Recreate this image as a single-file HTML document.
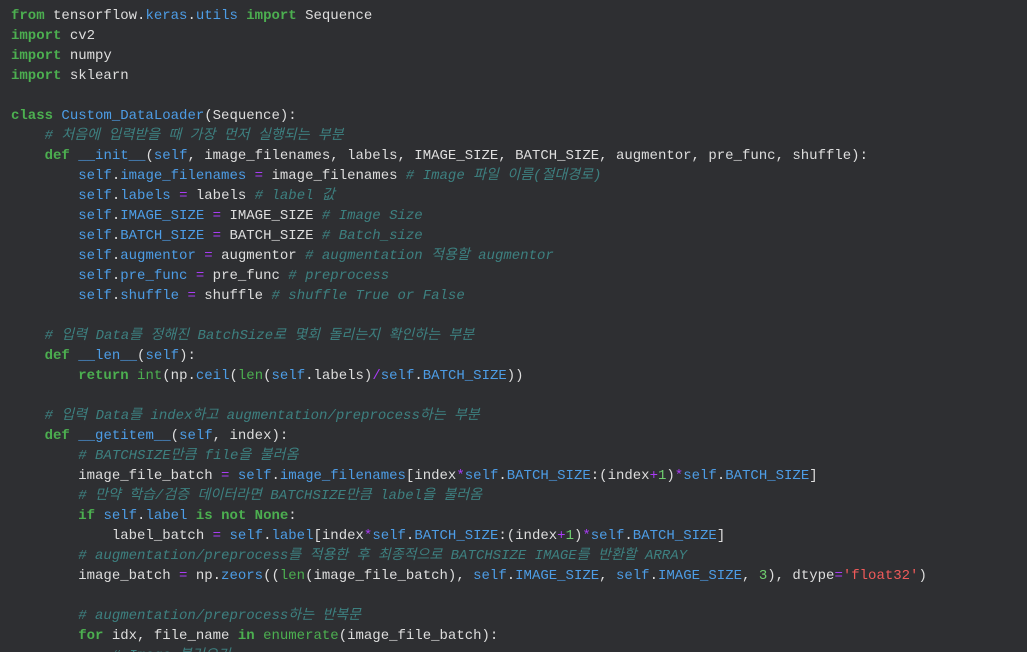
<!DOCTYPE html>
<html><head><meta charset="utf-8"><style>
html,body{margin:0;padding:0;background:#2e2f32;width:1027px;height:652px;overflow:hidden}
pre{margin:0;padding:6px 0 0 11px;font-family:"Liberation Mono","Noto Sans CJK KR",monospace;font-size:14px;line-height:20px;color:#dedede;white-space:pre}
.k{color:#4caf50;font-weight:bold}
.f{color:#4caf50}
.b{color:#4d9de6}
.o{color:#a93cf5}
.c{color:#3d8080;font-style:italic}
.s{color:#f05a5a}
.n{color:#6fcf6f}
</style></head><body><pre><span class="k">from</span> tensorflow.<span class="b">keras</span>.<span class="b">utils</span> <span class="k">import</span> Sequence
<span class="k">import</span> cv2
<span class="k">import</span> numpy
<span class="k">import</span> sklearn

<span class="k">class</span> <span class="b">Custom_DataLoader</span>(Sequence):
    <span class="c"># 처음에 입력받을 때 가장 먼저 실행되는 부분</span>
    <span class="k">def</span> <span class="b">__init__</span>(<span class="b">self</span>, image_filenames, labels, IMAGE_SIZE, BATCH_SIZE, augmentor, pre_func, shuffle):
        <span class="b">self</span>.<span class="b">image_filenames</span> <span class="o">=</span> image_filenames <span class="c"># Image 파일 이름(절대경로)</span>
        <span class="b">self</span>.<span class="b">labels</span> <span class="o">=</span> labels <span class="c"># label 값</span>
        <span class="b">self</span>.<span class="b">IMAGE_SIZE</span> <span class="o">=</span> IMAGE_SIZE <span class="c"># Image Size</span>
        <span class="b">self</span>.<span class="b">BATCH_SIZE</span> <span class="o">=</span> BATCH_SIZE <span class="c"># Batch_size</span>
        <span class="b">self</span>.<span class="b">augmentor</span> <span class="o">=</span> augmentor <span class="c"># augmentation 적용할 augmentor</span>
        <span class="b">self</span>.<span class="b">pre_func</span> <span class="o">=</span> pre_func <span class="c"># preprocess</span>
        <span class="b">self</span>.<span class="b">shuffle</span> <span class="o">=</span> shuffle <span class="c"># shuffle True or False</span>

    <span class="c"># 입력 Data를 정해진 BatchSize로 몇회 돌리는지 확인하는 부분</span>
    <span class="k">def</span> <span class="b">__len__</span>(<span class="b">self</span>):
        <span class="k">return</span> <span class="f">int</span>(np.<span class="b">ceil</span>(<span class="f">len</span>(<span class="b">self</span>.labels)<span class="o">/</span><span class="b">self</span>.<span class="b">BATCH_SIZE</span>))

    <span class="c"># 입력 Data를 index하고 augmentation/preprocess하는 부분</span>
    <span class="k">def</span> <span class="b">__getitem__</span>(<span class="b">self</span>, index):
        <span class="c"># BATCHSIZE만큼 file을 불러옴</span>
        image_file_batch <span class="o">=</span> <span class="b">self</span>.<span class="b">image_filenames</span>[index<span class="o">*</span><span class="b">self</span>.<span class="b">BATCH_SIZE</span>:(index<span class="o">+</span><span class="n">1</span>)<span class="o">*</span><span class="b">self</span>.<span class="b">BATCH_SIZE</span>]
        <span class="c"># 만약 학습/검증 데이터라면 BATCHSIZE만큼 label을 불러옴</span>
        <span class="k">if</span> <span class="b">self</span>.<span class="b">label</span> <span class="k">is not None</span>:
            label_batch <span class="o">=</span> <span class="b">self</span>.<span class="b">label</span>[index<span class="o">*</span><span class="b">self</span>.<span class="b">BATCH_SIZE</span>:(index<span class="o">+</span><span class="n">1</span>)<span class="o">*</span><span class="b">self</span>.<span class="b">BATCH_SIZE</span>]
        <span class="c"># augmentation/preprocess를 적용한 후 최종적으로 BATCHSIZE IMAGE를 반환할 ARRAY</span>
        image_batch <span class="o">=</span> np.<span class="b">zeors</span>((<span class="f">len</span>(image_file_batch), <span class="b">self</span>.<span class="b">IMAGE_SIZE</span>, <span class="b">self</span>.<span class="b">IMAGE_SIZE</span>, <span class="n">3</span>), dtype<span class="o">=</span><span class="s">'float32'</span>)

        <span class="c"># augmentation/preprocess하는 반복문</span>
        <span class="k">for</span> idx, file_name <span class="k">in</span> <span class="f">enumerate</span>(image_file_batch):
            <span class="c"># Image 불러오기</span>
</pre></body></html>
